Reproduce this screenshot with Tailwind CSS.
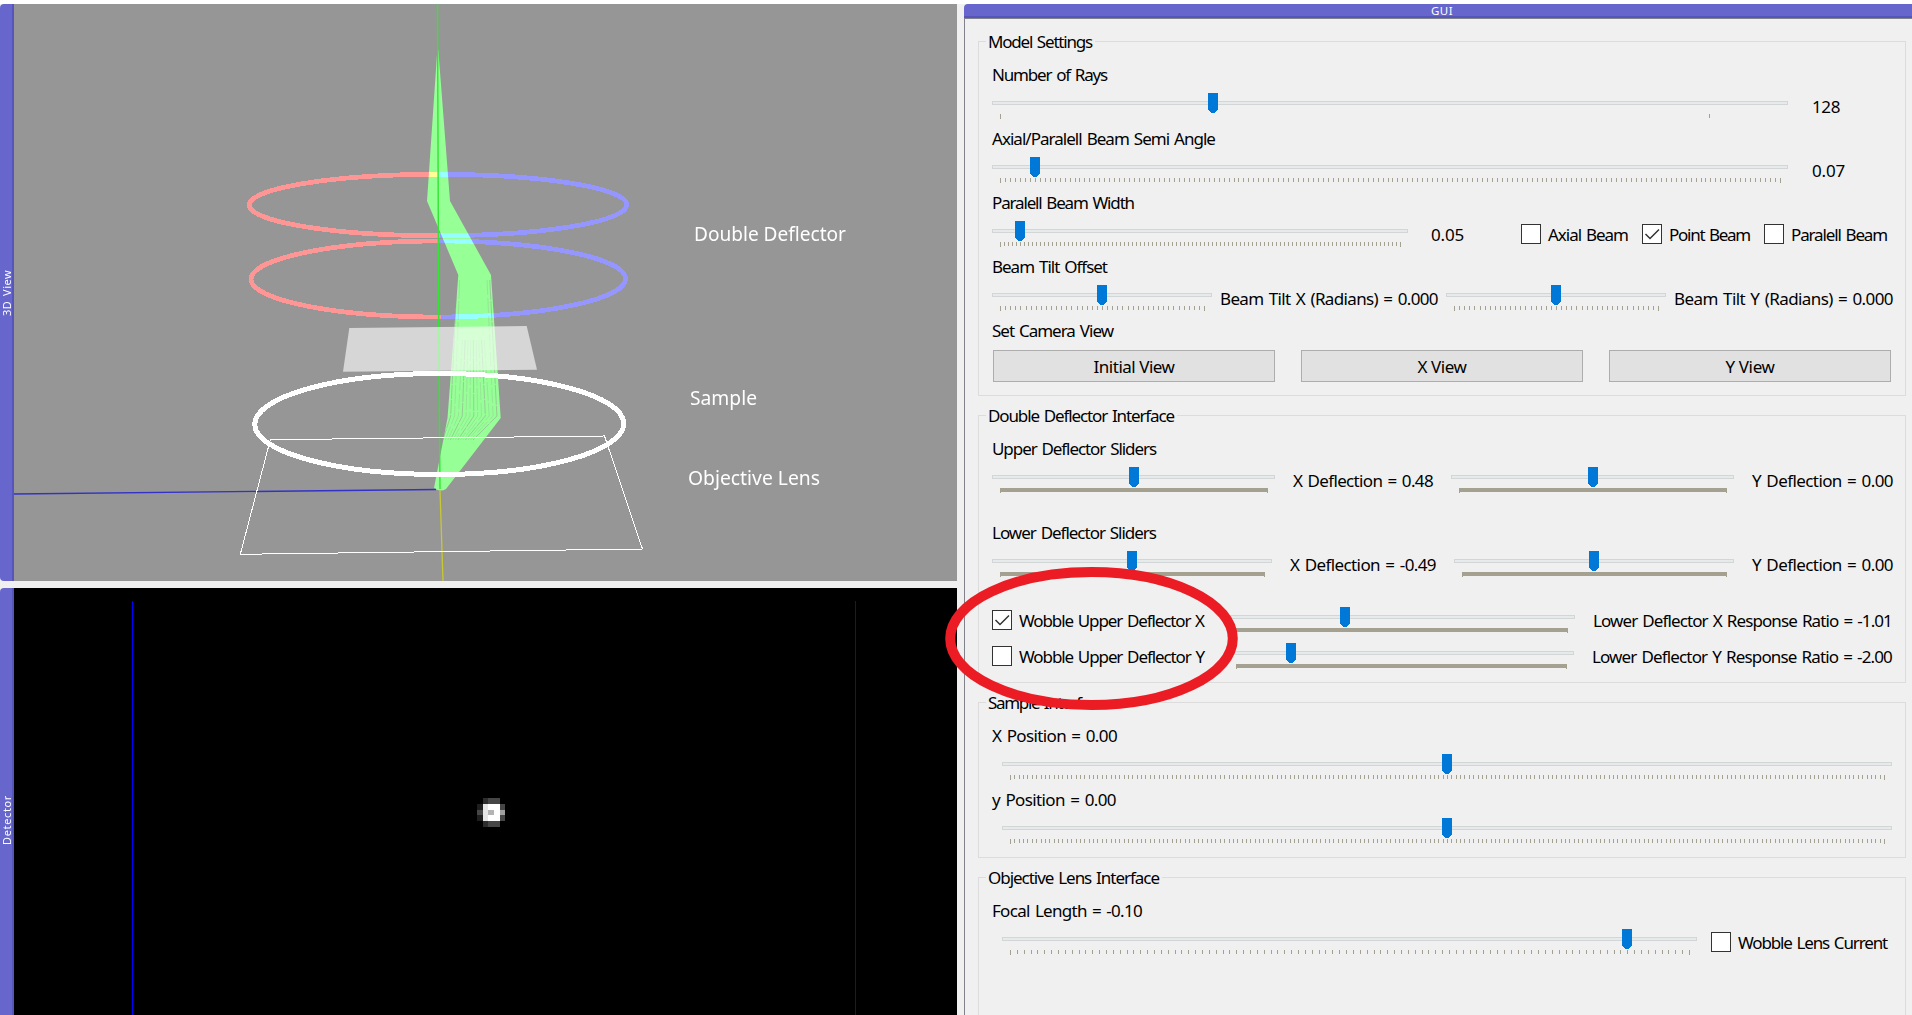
<!DOCTYPE html>
<html lang="en">
<head>
<meta charset="utf-8">
<title>GUI</title>
<script src="https://cdn.jsdelivr.net/npm/@tailwindcss/browser@4"></script>
</head>
<body class="relative flex h-[1015px] w-[1912px] overflow-hidden bg-[#f0f0f0] pt-1 font-['Noto_Sans',sans-serif] text-[17px] leading-6 text-black [word-spacing:1.5px]">
<div class="absolute inset-x-0 top-0 h-1 bg-white"></div>

<!-- Left column: 3D view and detector docks -->
<div class="flex w-[957px] shrink-0 flex-col gap-[7px]">
  <section class="flex h-[577px]">
    <div class="flex w-[14px] items-center justify-center rounded-l-sm border-r-2 border-[#5555bb] bg-[#6666cc]">
      <span class="rotate-180 text-[11px] leading-none whitespace-nowrap text-white [writing-mode:vertical-rl]" data-h="46">3D View</span>
    </div>
    <svg class="isolate h-[577px] w-[943px] bg-[#969696] font-['Noto_Sans',sans-serif] [word-spacing:0]" viewBox="14 4 943 577">
      <g fill="none" stroke-width="4.7" shape-rendering="crispEdges">
        <path stroke="#ff9696" d="M438 174.3A189 31 0 0 0 249 205A189 31 0 0 0 440 235.7"/>
        <path stroke="#9696ff" d="M438 174.3A189 30.5 0 0 1 626.8 204.2A189 31 0 0 1 440 235.7"/>
        <path stroke="#ff9696" d="M438 241A188 38.5 0 0 0 251 279.8A188 38 0 0 0 441 317"/>
        <path stroke="#9696ff" d="M438 241A188 38 0 0 1 625.6 278.2A188 38.5 0 0 1 441 317"/>
      </g>
      <path class="mix-blend-lighten" fill="#96ff96" d="M437.3 50L427 201L458.3 275L447.5 418L434 488Q440 492.500 446 489L500.700 418L491 275L450 201L438.300 50Z"/>
      <g fill="none" stroke="#969696" stroke-width="1" id="rays"></g>
      <path stroke="#32e632" stroke-width="1.4" d="M437.500 4L438.700 330M439 372L440 489"/>
      <path stroke="#3232c8" stroke-width="1.4" d="M14 494L436 489.500"/>
      <path stroke="#c8c832" stroke-width="1.3" d="M440 490.500L443 581"/>
      <path fill="#fff" fill-opacity=".61" d="M349.300 328L526.700 326L537 369.700L343 371.700Z"/>
      <path stroke="#96ff96" stroke-width="1" d="M438.700 328L439 371"/>
      <path fill="none" stroke="#fff" stroke-width="5" shape-rendering="crispEdges" d="M439 373.500A184.500 51 0 0 0 254.800 425A184.500 50 0 0 0 439 474.500A184.500 51 0 0 0 623.700 422.700A184.500 50 0 0 0 439 373.500"/>
      <path fill="none" stroke="#fff" stroke-width="1" shape-rendering="crispEdges" d="M270.300 439.700L604.500 436L642.500 549L240.300 554.300Z"/>
      <g fill="#fff" font-size="19.500">
        <text x="694" y="240.500" textLength="152" lengthAdjust="spacingAndGlyphs">Double Deflector</text>
        <text x="690" y="404.500" textLength="67" lengthAdjust="spacingAndGlyphs">Sample</text>
        <text x="688" y="484.500" textLength="132" lengthAdjust="spacingAndGlyphs">Objective Lens</text>
      </g>
    </svg>
  </section>
  <section class="flex h-[427px]">
    <div class="flex w-[14px] items-start justify-center rounded-tl-sm border-r-2 border-[#5555bb] bg-[#6666cc] pt-[207px]">
      <span class="rotate-180 text-[11px] leading-none whitespace-nowrap text-white [writing-mode:vertical-rl]" data-h="50">Detector</span>
    </div>
    <svg class="h-[427px] w-[943px] bg-black" viewBox="14 588 943 427" shape-rendering="crispEdges">
      <path fill="#0000ff" d="M132 601h1v414h-1zM855 601h1v414h-1z"/>
      <path fill="#1e1e1e" d="M477 804h6v17h-6z"/>
      <path fill="#464646" d="M488 798h12v29h-12zM500 804h5v17h-5zM477 810h6v5h-6z"/>
      <path fill="#2d2d2d" d="M483 798h5v29h-5z"/>
      <path fill="#a0a0a0" d="M500 810h5v5h-5z"/>
      <path fill="#fff" d="M483 804h17v17h-17z"/>
      <path fill="#e6e6e6" d="M483 804h5v17h-5z"/>
      <path fill="#b4b4b4" d="M488 810h6v5h-6z"/>
    </svg>
  </section>
</div>

<!-- GUI dock -->
<main class="ml-[7px] flex w-[948px] flex-col">
  <div class="flex h-[14px] items-center rounded-tl-sm border-b-2 border-[#5555bb] bg-[#6666cc] pt-px pl-[467px]">
    <span class="text-[11.5px] leading-3 text-white" data-w="22">GUI</span>
  </div>
  <div class="flex flex-1 flex-col gap-5 border-t border-l border-[#82828c] pt-[22px] pl-[13px]">

    <section class="relative h-[355px] w-[928px] border border-[#dcdcdc] px-[13px] pt-[19px]">
      <h2 class="absolute -top-[12px] left-[7px] bg-[#f0f0f0] pr-[3px] pl-[2px]"><span data-w="104">Model Settings</span></h2>
      <div class="flex h-8 pt-[2px]"><span data-w="115">Number of Rays</span></div>
      <div class="flex h-8"><svg data-slider="796,216" data-ticks="8,717,1"></svg><span class="ml-[24px] pt-[2px]" data-w="28">128</span></div>
      <div class="flex h-8 pt-[2px]"><span data-w="223">Axial/Paralell Beam Semi Angle</span></div>
      <div class="flex h-8"><svg data-slider="796,38" data-ticks="8,788,157"></svg><span class="ml-[24px] pt-[2px]" data-w="33">0.07</span></div>
      <div class="flex h-8 pt-[2px]"><span data-w="142">Paralell Beam Width</span></div>
      <div class="flex h-8"><svg data-slider="416,23" data-ticks="8,408,100"></svg><span class="ml-[23px] w-[90px] shrink-0 pt-[2px]"><span data-w="33">0.05</span></span>
        <label class="flex w-[121px] shrink-0 gap-[7px]"><i data-check="0"></i><span class="pt-[2px]"><span data-w="80">Axial Beam</span></span></label>
        <label class="flex w-[122px] shrink-0 gap-[7px]"><i data-check="1"></i><span class="pt-[2px]"><span data-w="81">Point Beam</span></span></label>
        <label class="flex shrink-0 gap-[7px]"><i data-check="0"></i><span class="pt-[2px]"><span data-w="96">Paralell Beam</span></span></label>
      </div>
      <div class="flex h-8 pt-[2px]"><span data-w="115">Beam Tilt Offset</span></div>
      <div class="flex h-8"><svg data-slider="220,105" data-ticks="8,212,40"></svg><span class="ml-2 w-[226px] shrink-0 pt-[2px]"><span data-w="218">Beam Tilt X (Radians) = 0.000</span></span><svg data-slider="220,105" data-ticks="8,212,40"></svg><span class="ml-2 pt-[2px]"><span data-w="219">Beam Tilt Y (Radians) = 0.000</span></span></div>
      <div class="flex h-8 pt-[2px]"><span data-w="121">Set Camera View</span></div>
      <div class="mt-px ml-px flex gap-[26px]">
        <button class="h-8 w-[282px] border border-[#adadad] bg-[#e1e1e1] pt-[2px]"><span data-w="81">Initial View</span></button>
        <button class="h-8 w-[282px] border border-[#adadad] bg-[#e1e1e1] pt-[2px]"><span data-w="49">X View</span></button>
        <button class="h-8 w-[282px] border border-[#adadad] bg-[#e1e1e1] pt-[2px]"><span data-w="49">Y View</span></button>
      </div>
    </section>

    <section class="relative -mt-px h-[268px] w-[928px] border border-[#dcdcdc] px-[13px] pt-[19px]">
      <h2 class="absolute -top-[12px] left-[7px] bg-[#f0f0f0] pr-[3px] pl-[2px]"><span data-w="186">Double Deflector Interface</span></h2>
      <div class="flex h-8 pt-[2px]"><span data-w="164">Upper Deflector Sliders</span></div>
      <div class="mb-5 flex h-8"><svg data-slider="283,137" data-bar="8,276"></svg><span class="ml-[18px] w-[158px] shrink-0 pt-[2px]"><span data-w="140">X Deflection = 0.48</span></span><svg data-slider="283,137" data-bar="8,276"></svg><span class="ml-[18px] pt-[2px]"><span data-w="141">Y Deflection = 0.00</span></span></div>
      <div class="flex h-8 pt-[2px]"><span data-w="164">Lower Deflector Sliders</span></div>
      <div class="mb-6 flex h-8"><svg data-slider="280,135" data-bar="8,273"></svg><span class="ml-[18px] w-[164px] shrink-0 pt-[2px]"><span data-w="146">X Deflection = -0.49</span></span><svg data-slider="280,135" data-bar="8,273"></svg><span class="ml-[18px] pt-[2px]"><span data-w="141">Y Deflection = 0.00</span></span></div>
      <div class="flex h-9"><label class="flex w-[236px] shrink-0 gap-[7px]"><i data-check="1"></i><span class="pt-[2px]"><span data-w="185">Wobble Upper Deflector X</span></span></label><svg data-slider="347,112" data-bar="8,340"></svg><span class="ml-[18px] pt-[2px]"><span data-w="299">Lower Deflector X Response Ratio = -1.01</span></span></div>
      <div class="flex h-9"><label class="flex w-[236px] shrink-0 gap-[7px]"><i data-check="0"></i><span class="pt-[2px]"><span data-w="185">Wobble Upper Deflector Y</span></span></label><svg data-slider="346,58" data-bar="8,339"></svg><span class="ml-[18px] pt-[2px]"><span data-w="300">Lower Deflector Y Response Ratio = -2.00</span></span></div>
    </section>

    <section class="relative -mt-px h-[156px] w-[928px] border border-[#dcdcdc] px-[13px] pt-[19px]">
      <h2 class="absolute -top-[12px] left-[7px] bg-[#f0f0f0] pr-[3px] pl-[2px]"><span data-w="116">Sample Interface</span></h2>
      <div class="flex h-8 pt-[2px]"><span data-w="125">X Position = 0.00</span></div>
      <div class="flex h-8 pl-[10px]"><svg data-slider="890,440" data-ticks="8,882,200"></svg></div>
      <div class="flex h-8 pt-[2px]"><span data-w="124">y Position = 0.00</span></div>
      <div class="flex h-8 pl-[10px]"><svg data-slider="890,440" data-ticks="8,882,200"></svg></div>
    </section>

    <section class="relative -mt-px h-[160px] w-[928px] shrink-0 border border-b-0 border-[#dcdcdc] px-[13px] pt-[19px]">
      <h2 class="absolute -top-[12px] left-[7px] bg-[#f0f0f0] pr-[3px] pl-[2px]"><span data-w="171">Objective Lens Interface</span></h2>
      <div class="flex h-8 pt-[2px]"><span data-w="150">Focal Length = -0.10</span></div>
      <div class="flex h-8 pl-[10px]"><svg data-slider="695,620" data-ticks="8,687,99"></svg><label class="ml-[14px] flex gap-[7px]"><i data-check="0"></i><span class="pt-[2px]"><span data-w="149">Wobble Lens Current</span></span></label></div>
    </section>
  </div>
</main>

<!-- Highlight around the wobble checkboxes -->
<svg class="pointer-events-none absolute top-[560px] left-[940px] h-[156px] w-[304px]" viewBox="940 560 304 156"><ellipse cx="1091.500" cy="638.500" rx="141.300" ry="66.500" fill="none" stroke="#ec1c24" stroke-width="10"/></svg>

<script>
// Sliders: data-slider = "width,handle left", ticks = "first,last,intervals", bar = "first,last"
document.querySelectorAll('svg[data-slider]').forEach(s => {
  const [w, h] = s.dataset.slider.split(',').map(Number);
  s.setAttribute('width', w); s.setAttribute('height', 27);
  s.setAttribute('class', 'shrink-0');
  s.setAttribute('shape-rendering', 'crispEdges');
  let out = `<rect x=".5" y="8.5" width="${w - 1}" height="3" fill="#e7eaea" stroke="#d3d6d6"/>`, d = '';
  if (s.dataset.ticks) {
    const [a, b, n] = s.dataset.ticks.split(',').map(Number);
    for (let i = 0; i <= n; i++) {
      const x = Math.round(a + (b - a) * i / n);
      d += `M${x} 21h1v${i === 0 || (i === n && n > 1) ? 5 : 4}h-1z`;
    }
  } else {
    const [a, b] = s.dataset.bar.split(',').map(Number);
    d = `M${a} 21H${b}v5h-1v-1H${a + 1}v1h-1z`;
  }
  out += `<path fill="#a5a191" d="${d}"/><path fill="#0078d7" d="M${h} 0h10v17h-1v1h-1v1h-1v1h-4v-1h-1v-1h-1v-1h-1z"/>`;
  s.innerHTML = out;
});
document.querySelectorAll('i[data-check]').forEach(e => {
  e.className = 'mt-[3px] block h-5 w-5 shrink-0 border border-[#333333] bg-white';
  if (e.dataset.check === '1') e.innerHTML = '<svg width="18" height="18" fill="none" stroke="#333" stroke-width="1.500"><path d="M2.500 9L7 13.500L16 4.500"/></svg>';
});
function fit() {
  document.querySelectorAll('[data-w],[data-h]').forEach(e => {
    const v = e.dataset.h !== undefined, t = Number(v ? e.dataset.h : e.dataset.w);
    e.style.whiteSpace = 'nowrap';
    e.style.letterSpacing = '0.001px';
    const r = document.createRange(); r.selectNodeContents(e);
    const b = r.getBoundingClientRect();
    e.style.letterSpacing = ((t - (v ? b.height : b.width)) / e.textContent.length).toFixed(3) + 'px';
  });
}
fit();
addEventListener('load', fit);
document.fonts.ready.then(fit);
new ResizeObserver(fit).observe(document.body);
// Gaps between individual rays
let g = '';
for (let i = 0; i < 13; i++) {
  const f = (i + .7) / 13.500;
  g += `<path stroke-opacity="${i % 3 ? .3 : .6}" stroke-width=".8" stroke-dasharray="${14 + i * 5 % 9} ${1 + i % 3}" d="M${455 + 37 * f} ${i < 2 || i > 10 ? 280 : 340}L${448 + 52 * f} 416L${441 + 34 * f} 440"/>`;
}
document.getElementById('rays').innerHTML = g;
</script>
</body>
</html>
